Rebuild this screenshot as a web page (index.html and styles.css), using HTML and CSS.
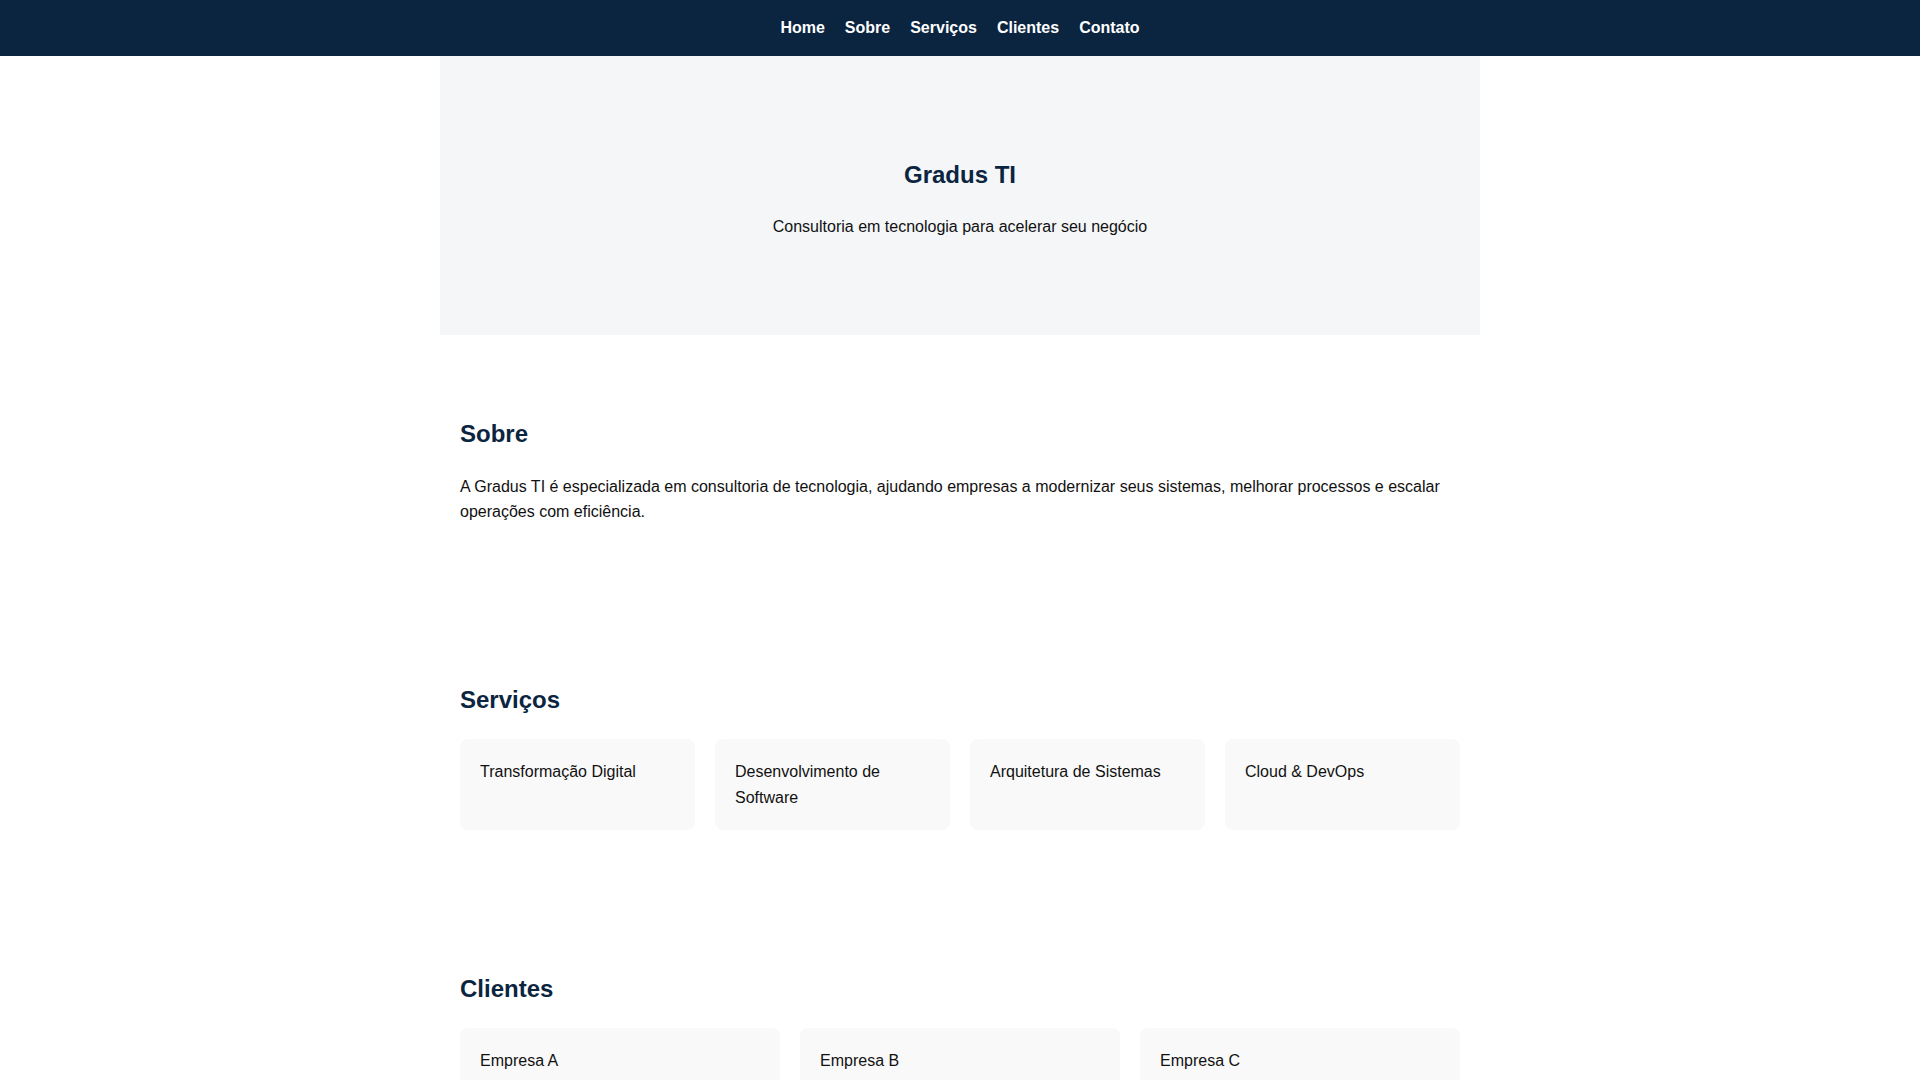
FILE: index.html
```html
<!DOCTYPE html>
<html lang="pt-BR">
<head>
<meta charset="utf-8">
<title>Gradus TI</title>
<link rel="stylesheet" href="styles.css">
</head>
<body>
<header class="topbar">
  <nav class="nav">
    <a href="#home">Home</a>
    <a href="#sobre">Sobre</a>
    <a href="#servicos">Serviços</a>
    <a href="#clientes">Clientes</a>
    <a href="#contato">Contato</a>
  </nav>
</header>
<main>
  <section class="hero" id="home">
    <h1>Gradus TI</h1>
    <p>Consultoria em tecnologia para acelerar seu negócio</p>
  </section>
  <section class="section" id="sobre">
    <h2>Sobre</h2>
    <p>A Gradus TI é especializada em consultoria de tecnologia, ajudando empresas a modernizar seus sistemas, melhorar processos e escalar operações com eficiência.</p>
  </section>
  <section class="section" id="servicos">
    <h2>Serviços</h2>
    <div class="grid grid-4">
      <div class="card">Transformação Digital</div>
      <div class="card">Desenvolvimento de Software</div>
      <div class="card">Arquitetura de Sistemas</div>
      <div class="card">Cloud &amp; DevOps</div>
    </div>
  </section>
  <section class="section" id="clientes">
    <h2>Clientes</h2>
    <div class="grid grid-3">
      <div class="card">Empresa A</div>
      <div class="card">Empresa B</div>
      <div class="card">Empresa C</div>
    </div>
  </section>
</main>
</body>
</html>
```

FILE: styles.css
```css
* { box-sizing: border-box; }

body {
  margin: 0;
  font-family: "Liberation Sans", Arial, sans-serif;
  font-size: 16px;
  line-height: 1.6;
  color: #111111;
  background: #ffffff;
}

.topbar {
  background: #0b2540;
  height: 56px;
  display: flex;
  align-items: center;
  justify-content: center;
}

.nav {
  display: flex;
  gap: 20px;
}

.nav a {
  color: #ffffff;
  font-weight: bold;
  text-decoration: none;
}

.hero {
  max-width: 1040px;
  margin: 0 auto;
  background: #f4f6f8;
  padding: 100px 20px 95.5px;
  text-align: center;
}

.hero h1 {
  margin: 0 0 20px;
  font-size: 24px;
  color: #0b2540;
}

.hero p {
  margin: 0;
}

.section {
  max-width: 1040px;
  margin: 0 auto;
  padding: 60px 20px;
}

.section h2 {
  font-size: 24px;
  margin: 0.83em 0;
  color: #0b2540;
}

.section p {
  margin: 16px 0;
}

.grid {
  display: grid;
  gap: 20px;
}

.grid-4 { grid-template-columns: repeat(4, 1fr); }
.grid-3 { grid-template-columns: repeat(3, 1fr); }

.card {
  background: #f9f9f9;
  border-radius: 8px;
  padding: 20px;
}
```
